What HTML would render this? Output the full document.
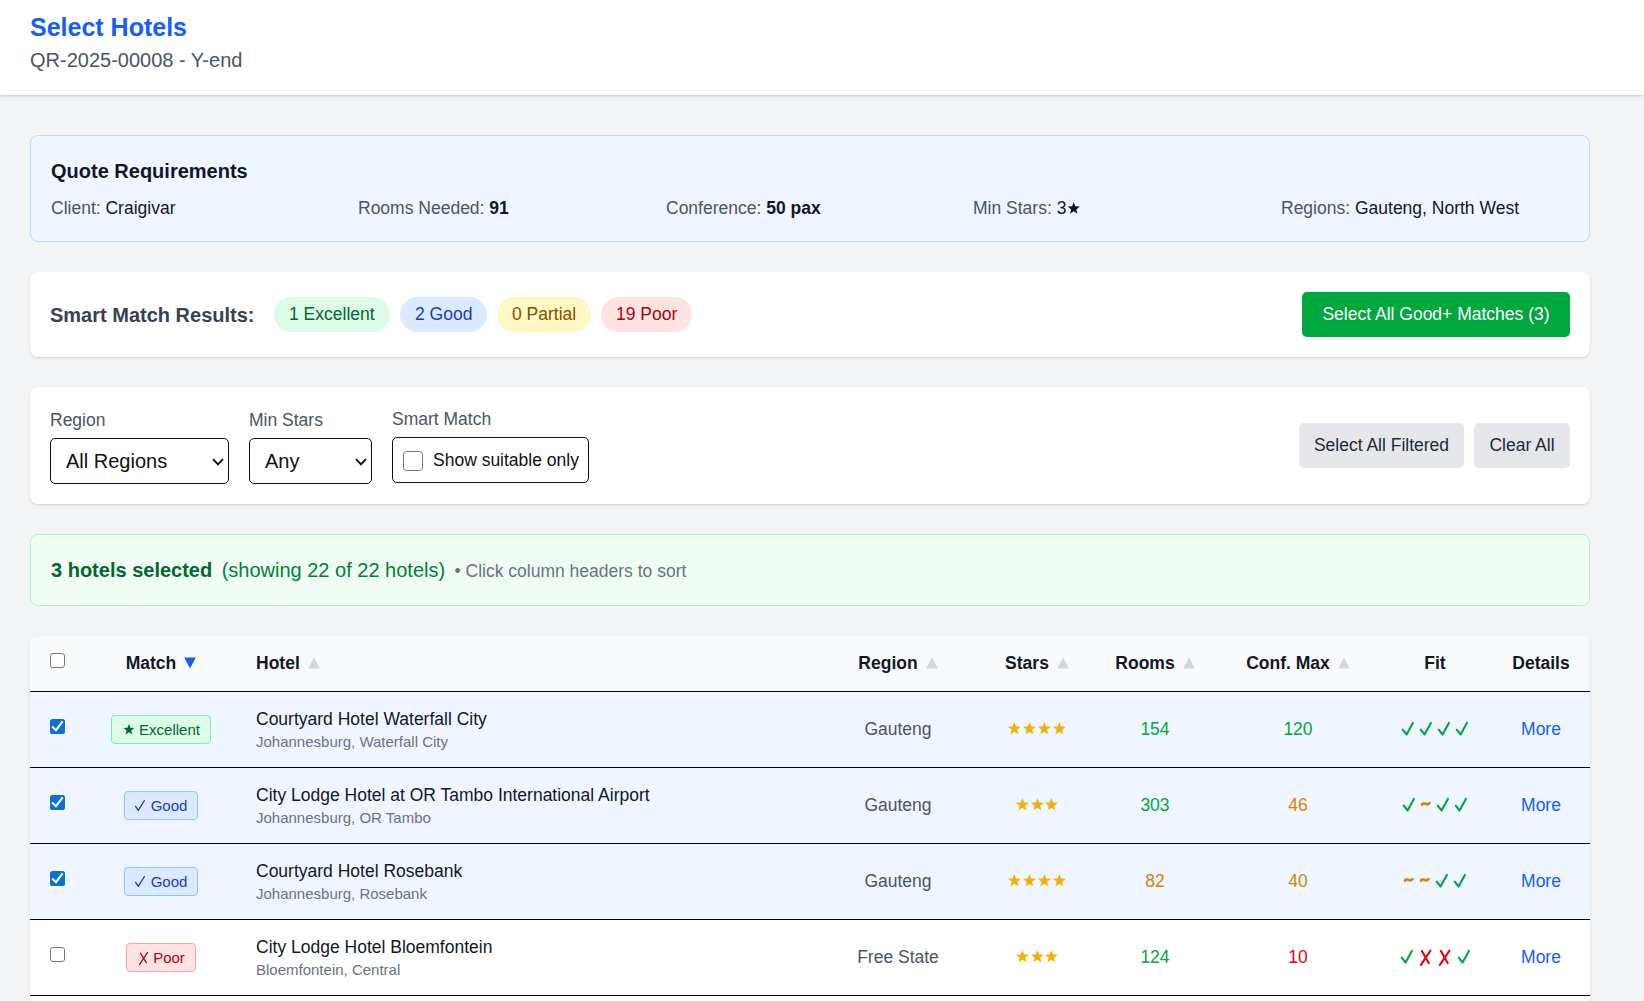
<!DOCTYPE html>
<html><head><meta charset="utf-8">
<style>
*{box-sizing:border-box;margin:0;padding:0}
html,body{width:1644px;height:1001px;overflow:hidden}
body{background:#f3f4f6;font-family:"Liberation Sans",sans-serif;color:#101828;position:relative}
.abs{position:absolute}
#hdr{left:0;top:0;width:1644px;height:95px;background:#fff;box-shadow:0 1px 3px rgba(0,0,0,.12),0 1px 2px rgba(0,0,0,.08)}
#title{left:30px;top:10px;font-size:25px;line-height:35px;font-weight:700;color:#155dfc}
#sub{left:30px;top:45px;font-size:20px;line-height:30px;color:#4a5565}
.card{left:30px;width:1560px;background:#fff;border-radius:8px;box-shadow:0 1px 3px rgba(0,0,0,.1),0 1px 2px rgba(0,0,0,.06)}
#quote{top:135px;height:107px;background:#eff6ff;border:1px solid #c2d9f3;box-shadow:none}
#qt{left:20px;top:20px;font-size:20px;line-height:30px;font-weight:700;color:#101828}
.qi{top:60px;font-size:17.5px;line-height:25px;color:#4a5565;white-space:nowrap}
.qi b{color:#101828}
.qi span{color:#101828}
#smart{top:272px;height:85px}
#smt{left:20px;top:27.5px;font-size:20px;line-height:30px;font-weight:700;color:#364153;white-space:nowrap}
.pill{top:25px;height:35px;border-radius:999px;font-size:17.5px;line-height:35px;padding:0 15px;white-space:nowrap;text-align:center}
.btn{font-size:17.5px;line-height:45px;height:45px;border-radius:5px;text-align:center;white-space:nowrap}
#filt{top:387px;height:117px}
.lbl{font-size:17.5px;line-height:25px;color:#4a5565;white-space:nowrap}
.sel{height:46px;border:1px solid #111;border-radius:5px;background:#fff;font-size:20px;line-height:44px;padding-left:15px;color:#111}
#banner{top:534px;height:72px;background:#f0fdf4;border:1px solid #bdeccc;box-shadow:none}
#tbl{top:636px;height:420px;overflow:hidden;border-radius:8px 8px 0 0}
.th{top:0;height:55px;line-height:55px;font-size:17.5px;font-weight:700;color:#101828;white-space:nowrap}
.row{left:0;width:1560px;height:75px}
.cell{white-space:nowrap}
.ctr{text-align:center}
.tri{margin-left:8px;vertical-align:0px}
.badge{height:29px;border:1px solid;border-radius:4px;font-size:15px;line-height:27px;text-align:center;white-space:nowrap}
.hname{left:226px;top:15px;font-size:17.5px;line-height:25px;color:#101828;white-space:nowrap}
.hsub{left:226px;top:40px;font-size:15px;line-height:20px;color:#6a7282;white-space:nowrap}
.cval{top:25px;width:200px;text-align:center;font-size:17.5px;line-height:25px;white-space:nowrap}
.stars{top:30px;width:200px;height:13px;display:flex;justify-content:center}
.fit{top:26px;width:200px;height:20px;display:flex;justify-content:center}
.fit svg{display:block;flex:none}
.chev{position:absolute;top:19px}
</style></head><body>
<div id="hdr" class="abs">
  <div id="title" class="abs">Select Hotels</div>
  <div id="sub" class="abs">QR-2025-00008 - Y-end</div>
</div>

<div id="quote" class="abs card">
  <div id="qt" class="abs">Quote Requirements</div>
  <div class="abs qi" style="left:20px">Client: <span>Craigivar</span></div>
  <div class="abs qi" style="left:327px">Rooms Needed: <b>91</b></div>
  <div class="abs qi" style="left:635px">Conference: <b>50 pax</b></div>
  <div class="abs qi" style="left:942px">Min Stars: <span>3<svg width="13.5" height="12" viewBox="0 0 13.5 12" style="vertical-align:0px"><path fill="#101828" d="M7.73 0.10L9.33 4.36L13.87 4.56L10.31 7.39L11.53 11.77L7.73 9.26L3.94 11.77L5.16 7.39L1.60 4.56L6.14 4.36Z"/></svg></span></div>
  <div class="abs qi" style="left:1250px">Regions: <span>Gauteng, North West</span></div>
</div>

<div id="smart" class="abs card">
  <div id="smt" class="abs">Smart Match Results:</div>
  <div class="abs pill" style="left:244px;background:#dcfce7;color:#016630">1 Excellent</div>
  <div class="abs pill" style="left:370px;background:#dbeafe;color:#193cb8">2 Good</div>
  <div class="abs pill" style="left:467px;background:#fef9c2;color:#894b00">0 Partial</div>
  <div class="abs pill" style="left:571px;background:#ffe2e2;color:#9f0712">19 Poor</div>
  <div class="abs btn" style="left:1272px;top:20px;width:268px;background:#00a63e;color:#fff">Select All Good+ Matches (3)</div>
</div>

<div id="filt" class="abs card">
  <div class="abs lbl" style="left:20px;top:21px">Region</div>
  <div class="abs sel" style="left:20px;top:51px;width:179px">All Regions<svg class="chev" style="left:161px" width="12" height="8" viewBox="0 0 12 8"><path d="M1 1.2L6 6.4L11 1.2" fill="none" stroke="#111" stroke-width="1.9"/></svg></div>
  <div class="abs lbl" style="left:219px;top:21px">Min Stars</div>
  <div class="abs sel" style="left:219px;top:51px;width:123px">Any<svg class="chev" style="left:105px" width="12" height="8" viewBox="0 0 12 8"><path d="M1 1.2L6 6.4L11 1.2" fill="none" stroke="#111" stroke-width="1.9"/></svg></div>
  <div class="abs lbl" style="left:362px;top:20px">Smart Match</div>
  <div class="abs sel" style="left:362px;top:50px;width:197px;height:46px;font-size:17.5px"><svg class="abs" style="left:10px;top:13px" width="20" height="20" viewBox="0 0 20 20"><rect x="0.5" y="0.5" width="19" height="19" rx="3" fill="#fff" stroke="#767676"/></svg><div class="abs" style="left:40px;top:10px;line-height:25px;color:#111">Show suitable only</div></div>
  <div class="abs btn" style="left:1269px;top:36px;width:165px;background:#e5e7eb;color:#1e2939">Select All Filtered</div>
  <div class="abs btn" style="left:1444px;top:36px;width:96px;background:#e5e7eb;color:#1e2939">Clear All</div>
</div>

<div id="banner" class="abs card">
  <div class="abs" style="left:20px;top:20px;line-height:30px;white-space:nowrap"><b style="font-size:20px;color:#016630">3 hotels selected</b> <span style="font-size:20px;color:#008236;margin-left:5px">(showing 22 of 22 hotels)</span> <span style="font-size:17.5px;color:#6a7282;margin-left:5px">• Click column headers to sort</span></div>
</div>

<div id="tbl" class="abs card">
<div class="abs" style="left:0;top:0;width:1560px;height:55px;background:#f9fafb"></div>
<svg class="abs" width="15" height="15" viewBox="0 0 15 15" style="left:20px;top:17px"><rect x="0.5" y="0.5" width="14" height="14" rx="2.4" fill="#fff" stroke="#767676" stroke-width="1"/></svg>
<div class="abs th ctr" style="left:31px;width:200px">Match<svg class="tri" width="12" height="12" viewBox="0 0 12 12"><path d="M0.2 0.5H11.8L6 11.5z" fill="#155dfc"/></svg></div>
<div class="abs th" style="left:226px">Hotel<svg class="tri" width="12" height="12" viewBox="0 0 12 12"><path d="M6 0.5L11.8 11.5H0.2z" fill="#d1d5dc"/></svg></div>
<div class="abs th ctr" style="left:768px;width:200px">Region<svg class="tri" width="12" height="12" viewBox="0 0 12 12"><path d="M6 0.5L11.8 11.5H0.2z" fill="#d1d5dc"/></svg></div>
<div class="abs th ctr" style="left:907px;width:200px">Stars<svg class="tri" width="12" height="12" viewBox="0 0 12 12"><path d="M6 0.5L11.8 11.5H0.2z" fill="#d1d5dc"/></svg></div>
<div class="abs th ctr" style="left:1025px;width:200px">Rooms<svg class="tri" width="12" height="12" viewBox="0 0 12 12"><path d="M6 0.5L11.8 11.5H0.2z" fill="#d1d5dc"/></svg></div>
<div class="abs th ctr" style="left:1168px;width:200px">Conf. Max<svg class="tri" width="12" height="12" viewBox="0 0 12 12"><path d="M6 0.5L11.8 11.5H0.2z" fill="#d1d5dc"/></svg></div>
<div class="abs th ctr" style="left:1305px;width:200px">Fit</div>
<div class="abs th ctr" style="left:1411px;width:200px">Details</div>
<div class="abs" style="left:0;top:55px;width:1560px;height:1px;background:#000"></div>
<div class="abs" style="left:0;top:131px;width:1560px;height:1px;background:#000"></div>
<div class="abs" style="left:0;top:207px;width:1560px;height:1px;background:#000"></div>
<div class="abs" style="left:0;top:283px;width:1560px;height:1px;background:#000"></div>
<div class="abs" style="left:0;top:359px;width:1560px;height:1px;background:#000"></div>
<div class="abs row" style="top:56px;background:#eff6ff">
<svg class="abs" width="15" height="15" viewBox="0 0 15 15" style="left:20px;top:27px"><rect x="0" y="0" width="15" height="15" rx="2.6" fill="#0b70d3"/><path d="M2.9 8.3L6 11.2L12 3.3" fill="none" stroke="#fff" stroke-width="2.1" stroke-linecap="square"/></svg>
<div class="abs badge" style="left:81.0px;top:23px;width:100px;background:#dcfce7;border-color:#7bf1a8;color:#016630"><svg width="13" height="11" viewBox="0 0 13 11" style="margin-right:4px;vertical-align:0px"><path fill="#016630" d="M6.92 0.10L8.33 3.86L12.34 4.04L9.20 6.54L10.27 10.41L6.92 8.19L3.57 10.41L4.64 6.54L1.50 4.04L5.51 3.86Z"/></svg>Excellent</div>
<div class="abs hname">Courtyard Hotel Waterfall City</div>
<div class="abs hsub">Johannesburg, Waterfall City</div>
<div class="abs cval" style="left:768px;color:#4a5565">Gauteng</div>
<div class="abs stars" style="left:907px"><svg width="14.8" height="13" viewBox="0 0 14.8 13" style="display:block;flex:none"><path fill="#f0b100" d="M7.40 0.10L9.07 4.58L13.85 4.78L10.11 7.76L11.38 12.37L7.40 9.73L3.41 12.37L4.69 7.76L0.95 4.78L5.72 4.58Z"/></svg><svg width="14.8" height="13" viewBox="0 0 14.8 13" style="display:block;flex:none"><path fill="#f0b100" d="M7.40 0.10L9.07 4.58L13.85 4.78L10.11 7.76L11.38 12.37L7.40 9.73L3.41 12.37L4.69 7.76L0.95 4.78L5.72 4.58Z"/></svg><svg width="14.8" height="13" viewBox="0 0 14.8 13" style="display:block;flex:none"><path fill="#f0b100" d="M7.40 0.10L9.07 4.58L13.85 4.78L10.11 7.76L11.38 12.37L7.40 9.73L3.41 12.37L4.69 7.76L0.95 4.78L5.72 4.58Z"/></svg><svg width="14.8" height="13" viewBox="0 0 14.8 13" style="display:block;flex:none"><path fill="#f0b100" d="M7.40 0.10L9.07 4.58L13.85 4.78L10.11 7.76L11.38 12.37L7.40 9.73L3.41 12.37L4.69 7.76L0.95 4.78L5.72 4.58Z"/></svg></div>
<div class="abs cval" style="left:1025px;color:#00a63e">154</div>
<div class="abs cval" style="left:1168px;color:#00a63e">120</div>
<div class="abs fit" style="left:1305px"><svg width="18" height="20" viewBox="0 0 18 20"><path d="M3.7 11.7L7.6 16.5L13.9 4.9" fill="none" stroke="#00a63e" stroke-width="2.1" stroke-linecap="round" stroke-linejoin="round"/></svg><svg width="18" height="20" viewBox="0 0 18 20"><path d="M3.7 11.7L7.6 16.5L13.9 4.9" fill="none" stroke="#00a63e" stroke-width="2.1" stroke-linecap="round" stroke-linejoin="round"/></svg><svg width="18" height="20" viewBox="0 0 18 20"><path d="M3.7 11.7L7.6 16.5L13.9 4.9" fill="none" stroke="#00a63e" stroke-width="2.1" stroke-linecap="round" stroke-linejoin="round"/></svg><svg width="18" height="20" viewBox="0 0 18 20"><path d="M3.7 11.7L7.6 16.5L13.9 4.9" fill="none" stroke="#00a63e" stroke-width="2.1" stroke-linecap="round" stroke-linejoin="round"/></svg></div>
<div class="abs cval" style="left:1411px;color:#155dfc">More</div>
</div>
<div class="abs row" style="top:132px;background:#eff6ff">
<svg class="abs" width="15" height="15" viewBox="0 0 15 15" style="left:20px;top:27px"><rect x="0" y="0" width="15" height="15" rx="2.6" fill="#0b70d3"/><path d="M2.9 8.3L6 11.2L12 3.3" fill="none" stroke="#fff" stroke-width="2.1" stroke-linecap="square"/></svg>
<div class="abs badge" style="left:94.0px;top:23px;width:74px;background:#dbeafe;border-color:#8ec5ff;color:#193cb8"><svg width="10" height="11" viewBox="0 0 10 11" style="margin-right:6px;vertical-align:0px"><path d="M0.6 6.4L3.3 10.4L9.4 0.5" fill="none" stroke="#193cb8" stroke-width="1.3" stroke-linecap="round" stroke-linejoin="round"/></svg>Good</div>
<div class="abs hname">City Lodge Hotel at OR Tambo International Airport</div>
<div class="abs hsub">Johannesburg, OR Tambo</div>
<div class="abs cval" style="left:768px;color:#4a5565">Gauteng</div>
<div class="abs stars" style="left:907px"><svg width="14.8" height="13" viewBox="0 0 14.8 13" style="display:block;flex:none"><path fill="#f0b100" d="M7.40 0.10L9.07 4.58L13.85 4.78L10.11 7.76L11.38 12.37L7.40 9.73L3.41 12.37L4.69 7.76L0.95 4.78L5.72 4.58Z"/></svg><svg width="14.8" height="13" viewBox="0 0 14.8 13" style="display:block;flex:none"><path fill="#f0b100" d="M7.40 0.10L9.07 4.58L13.85 4.78L10.11 7.76L11.38 12.37L7.40 9.73L3.41 12.37L4.69 7.76L0.95 4.78L5.72 4.58Z"/></svg><svg width="14.8" height="13" viewBox="0 0 14.8 13" style="display:block;flex:none"><path fill="#f0b100" d="M7.40 0.10L9.07 4.58L13.85 4.78L10.11 7.76L11.38 12.37L7.40 9.73L3.41 12.37L4.69 7.76L0.95 4.78L5.72 4.58Z"/></svg></div>
<div class="abs cval" style="left:1025px;color:#00a63e">303</div>
<div class="abs cval" style="left:1168px;color:#d08700">46</div>
<div class="abs fit" style="left:1305px"><svg width="18" height="20" viewBox="0 0 18 20"><path d="M3.7 11.7L7.6 16.5L13.9 4.9" fill="none" stroke="#00a63e" stroke-width="2.1" stroke-linecap="round" stroke-linejoin="round"/></svg><svg width="15.6" height="20" viewBox="0 0 15.6 20"><path d="M4 10.6C5.2 9.0 6.4 9.0 7.7 9.8S10.3 10.6 11.5 9.1" fill="none" stroke="#d08700" stroke-width="2.6" stroke-linecap="round"/></svg><svg width="18" height="20" viewBox="0 0 18 20"><path d="M3.7 11.7L7.6 16.5L13.9 4.9" fill="none" stroke="#00a63e" stroke-width="2.1" stroke-linecap="round" stroke-linejoin="round"/></svg><svg width="18" height="20" viewBox="0 0 18 20"><path d="M3.7 11.7L7.6 16.5L13.9 4.9" fill="none" stroke="#00a63e" stroke-width="2.1" stroke-linecap="round" stroke-linejoin="round"/></svg></div>
<div class="abs cval" style="left:1411px;color:#155dfc">More</div>
</div>
<div class="abs row" style="top:208px;background:#eff6ff">
<svg class="abs" width="15" height="15" viewBox="0 0 15 15" style="left:20px;top:27px"><rect x="0" y="0" width="15" height="15" rx="2.6" fill="#0b70d3"/><path d="M2.9 8.3L6 11.2L12 3.3" fill="none" stroke="#fff" stroke-width="2.1" stroke-linecap="square"/></svg>
<div class="abs badge" style="left:94.0px;top:23px;width:74px;background:#dbeafe;border-color:#8ec5ff;color:#193cb8"><svg width="10" height="11" viewBox="0 0 10 11" style="margin-right:6px;vertical-align:0px"><path d="M0.6 6.4L3.3 10.4L9.4 0.5" fill="none" stroke="#193cb8" stroke-width="1.3" stroke-linecap="round" stroke-linejoin="round"/></svg>Good</div>
<div class="abs hname">Courtyard Hotel Rosebank</div>
<div class="abs hsub">Johannesburg, Rosebank</div>
<div class="abs cval" style="left:768px;color:#4a5565">Gauteng</div>
<div class="abs stars" style="left:907px"><svg width="14.8" height="13" viewBox="0 0 14.8 13" style="display:block;flex:none"><path fill="#f0b100" d="M7.40 0.10L9.07 4.58L13.85 4.78L10.11 7.76L11.38 12.37L7.40 9.73L3.41 12.37L4.69 7.76L0.95 4.78L5.72 4.58Z"/></svg><svg width="14.8" height="13" viewBox="0 0 14.8 13" style="display:block;flex:none"><path fill="#f0b100" d="M7.40 0.10L9.07 4.58L13.85 4.78L10.11 7.76L11.38 12.37L7.40 9.73L3.41 12.37L4.69 7.76L0.95 4.78L5.72 4.58Z"/></svg><svg width="14.8" height="13" viewBox="0 0 14.8 13" style="display:block;flex:none"><path fill="#f0b100" d="M7.40 0.10L9.07 4.58L13.85 4.78L10.11 7.76L11.38 12.37L7.40 9.73L3.41 12.37L4.69 7.76L0.95 4.78L5.72 4.58Z"/></svg><svg width="14.8" height="13" viewBox="0 0 14.8 13" style="display:block;flex:none"><path fill="#f0b100" d="M7.40 0.10L9.07 4.58L13.85 4.78L10.11 7.76L11.38 12.37L7.40 9.73L3.41 12.37L4.69 7.76L0.95 4.78L5.72 4.58Z"/></svg></div>
<div class="abs cval" style="left:1025px;color:#d08700">82</div>
<div class="abs cval" style="left:1168px;color:#d08700">40</div>
<div class="abs fit" style="left:1305px"><svg width="15.6" height="20" viewBox="0 0 15.6 20"><path d="M4 10.6C5.2 9.0 6.4 9.0 7.7 9.8S10.3 10.6 11.5 9.1" fill="none" stroke="#d08700" stroke-width="2.6" stroke-linecap="round"/></svg><svg width="15.6" height="20" viewBox="0 0 15.6 20"><path d="M4 10.6C5.2 9.0 6.4 9.0 7.7 9.8S10.3 10.6 11.5 9.1" fill="none" stroke="#d08700" stroke-width="2.6" stroke-linecap="round"/></svg><svg width="18" height="20" viewBox="0 0 18 20"><path d="M3.7 11.7L7.6 16.5L13.9 4.9" fill="none" stroke="#00a63e" stroke-width="2.1" stroke-linecap="round" stroke-linejoin="round"/></svg><svg width="18" height="20" viewBox="0 0 18 20"><path d="M3.7 11.7L7.6 16.5L13.9 4.9" fill="none" stroke="#00a63e" stroke-width="2.1" stroke-linecap="round" stroke-linejoin="round"/></svg></div>
<div class="abs cval" style="left:1411px;color:#155dfc">More</div>
</div>
<div class="abs row" style="top:284px;background:#fff">
<svg class="abs" width="15" height="15" viewBox="0 0 15 15" style="left:20px;top:27px"><rect x="0.5" y="0.5" width="14" height="14" rx="2.4" fill="#fff" stroke="#767676" stroke-width="1"/></svg>
<div class="abs badge" style="left:96.0px;top:23px;width:70px;background:#ffe2e2;border-color:#ffa2a2;color:#9f0712"><svg width="9" height="13" viewBox="0 0 9 13" style="margin-left:1.5px;margin-right:5.5px;vertical-align:-2px"><path d="M0.6 12.4L8.5 0.6M1.4 1.2L7.3 10.6" fill="none" stroke="#9f0712" stroke-width="1.3" stroke-linecap="round"/></svg>Poor</div>
<div class="abs hname">City Lodge Hotel Bloemfontein</div>
<div class="abs hsub">Bloemfontein, Central</div>
<div class="abs cval" style="left:768px;color:#4a5565">Free State</div>
<div class="abs stars" style="left:907px"><svg width="14.8" height="13" viewBox="0 0 14.8 13" style="display:block;flex:none"><path fill="#f0b100" d="M7.40 0.10L9.07 4.58L13.85 4.78L10.11 7.76L11.38 12.37L7.40 9.73L3.41 12.37L4.69 7.76L0.95 4.78L5.72 4.58Z"/></svg><svg width="14.8" height="13" viewBox="0 0 14.8 13" style="display:block;flex:none"><path fill="#f0b100" d="M7.40 0.10L9.07 4.58L13.85 4.78L10.11 7.76L11.38 12.37L7.40 9.73L3.41 12.37L4.69 7.76L0.95 4.78L5.72 4.58Z"/></svg><svg width="14.8" height="13" viewBox="0 0 14.8 13" style="display:block;flex:none"><path fill="#f0b100" d="M7.40 0.10L9.07 4.58L13.85 4.78L10.11 7.76L11.38 12.37L7.40 9.73L3.41 12.37L4.69 7.76L0.95 4.78L5.72 4.58Z"/></svg></div>
<div class="abs cval" style="left:1025px;color:#00a63e">124</div>
<div class="abs cval" style="left:1168px;color:#e7000b">10</div>
<div class="abs fit" style="left:1305px"><svg width="18" height="20" viewBox="0 0 18 20"><path d="M3.7 11.7L7.6 16.5L13.9 4.9" fill="none" stroke="#00a63e" stroke-width="2.1" stroke-linecap="round" stroke-linejoin="round"/></svg><svg width="19.5" height="20" viewBox="0 0 19.5 20"><path d="M4.9 18.9L14.5 4.5M5.9 5L12.7 17" fill="none" stroke="#e7000b" stroke-width="2.1" stroke-linecap="round"/></svg><svg width="19.5" height="20" viewBox="0 0 19.5 20"><path d="M4.9 18.9L14.5 4.5M5.9 5L12.7 17" fill="none" stroke="#e7000b" stroke-width="2.1" stroke-linecap="round"/></svg><svg width="18" height="20" viewBox="0 0 18 20"><path d="M3.7 11.7L7.6 16.5L13.9 4.9" fill="none" stroke="#00a63e" stroke-width="2.1" stroke-linecap="round" stroke-linejoin="round"/></svg></div>
<div class="abs cval" style="left:1411px;color:#155dfc">More</div>
</div>
</div>
<!--/tbl-->
</body></html>
